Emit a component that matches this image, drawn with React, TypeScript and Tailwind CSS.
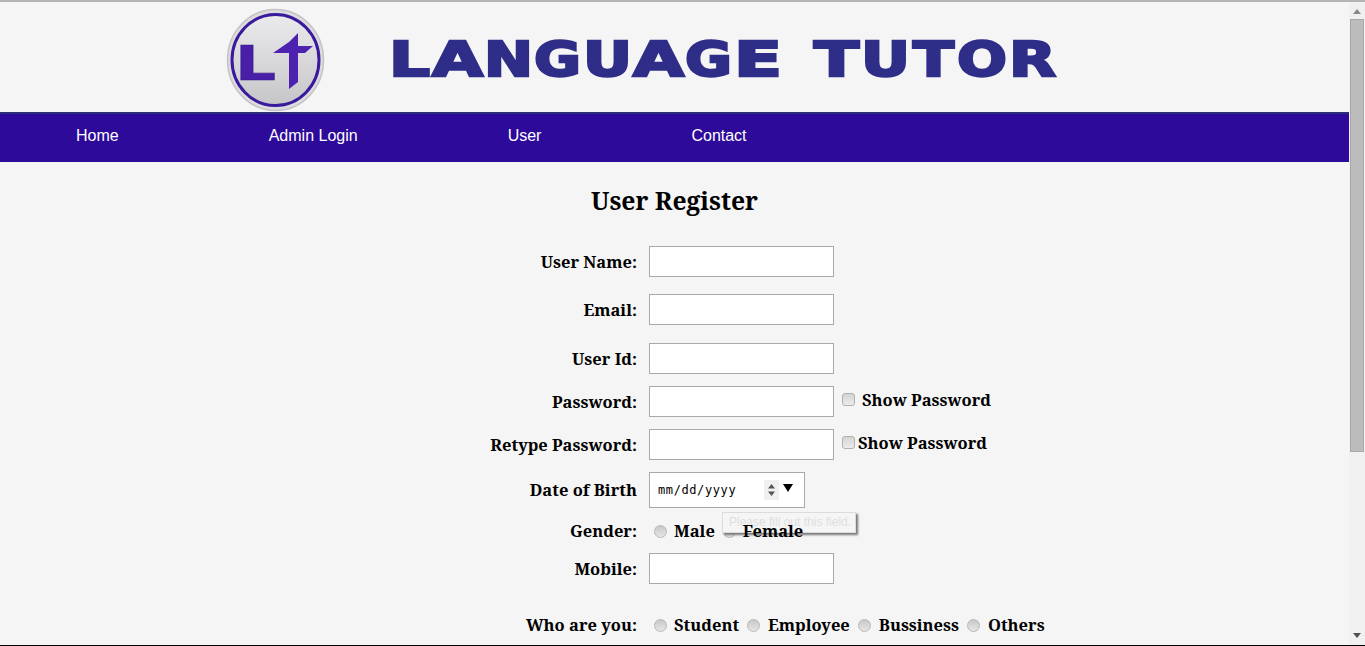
const SERIF = "font-['Noto_Serif','DejaVu_Serif','Liberation_Serif',serif]";

const letters = [
  { c: "L", x: 389, w: 41 },
  { c: "A", x: 432, w: 51 },
  { c: "N", x: 484, w: 49 },
  { c: "G", x: 534, w: 47 },
  { c: "U", x: 583, w: 49 },
  { c: "A", x: 633, w: 51 },
  { c: "G", x: 685, w: 47 },
  { c: "E", x: 734, w: 48 },
  { c: "T", x: 814, w: 45 },
  { c: "U", x: 861, w: 49 },
  { c: "T", x: 913, w: 41 },
  { c: "O", x: 957, w: 50 },
  { c: "R", x: 1009, w: 47 },
];

function Logo() {
  return (
    <svg width="1349" height="110" viewBox="0 2 1349 110" className="block" aria-label="Language Tutor">
      <defs>
        <linearGradient id="disc" x1="0" y1="0" x2="0" y2="1">
          <stop offset="0" stopColor="#ebebed" />
          <stop offset="1" stopColor="#c6c6c8" />
        </linearGradient>
        <clipPath id="tcut">
          <polygon points="298,33 298,46 313,46 305,53 298,53 298,82 289,89 289,53 273,53 289,42" />
        </clipPath>
      </defs>
      <ellipse cx="275.5" cy="60" rx="48" ry="50.5" fill="#dcdcde" stroke="#c4c4c6" strokeWidth="1.5" />
      <ellipse cx="275.5" cy="60" rx="43.5" ry="45.5" fill="url(#disc)" stroke="#3a1a9c" strokeWidth="3" />
      <text x="235" y="80" fontFamily="'DejaVu Sans',sans-serif" fontWeight="700" fontSize="48" fill="#4a1fa8" stroke="#35178c" strokeWidth="0.6" textLength="41" lengthAdjust="spacingAndGlyphs">L</text>
      <text x="268" y="93" fontFamily="'DejaVu Sans',sans-serif" fontWeight="700" fontSize="90" fill="#4e22b0" clipPath="url(#tcut)" textLength="60" lengthAdjust="spacingAndGlyphs">t</text>
      <text y="76" fontFamily="'DejaVu Sans',sans-serif" fontWeight="700" fontSize="48" fill="#2e2d88" stroke="#2e2d88" strokeWidth="2.4" strokeLinejoin="miter">
        {letters.map((l, i) => (
          <tspan key={i} x={l.x} textLength={l.w} lengthAdjust="spacingAndGlyphs">{l.c}</tspan>
        ))}
      </text>
    </svg>
  );
}

function TextBox() {
  return <input type="text" className="w-[185px] h-[31px] bg-white border border-[#a9a9a9] shrink-0" />;
}

function Radio() {
  return <span className="inline-block w-[13px] h-[13px] rounded-full border border-[#b8b8b8] bg-gradient-to-b from-[#c8c8c8] to-[#e6e6e6] shrink-0" />;
}

function Check() {
  return <span className="inline-block w-[13px] h-[13px] ml-2 mb-1 rounded-[3px] border border-[#b0b0b0] bg-gradient-to-b from-[#d4d4d4] to-[#ececec] shrink-0" />;
}

function Row({ label, className, children, labelClass = "" }: { label: string; className: string; children: React.ReactNode; labelClass?: string }) {
  return (
    <div className={`flex items-center ${className}`}>
      <div className={`w-[637px] text-right shrink-0 ${labelClass}`}>{label}</div>
      <div className="ml-3 flex items-center">{children}</div>
    </div>
  );
}

export default function App() {
  return (
    <div className="h-[646px] overflow-hidden flex flex-col bg-[#f5f5f5]">
      <div className="h-0.5 bg-[#b4b4b4] shrink-0" />
      <div className="flex flex-1 min-h-0">
        <main className="flex-1 min-w-0">
          <Logo />
          <nav className="h-[50px] bg-[#2e0a9a] border-t-2 border-[#2e2d78] flex items-center pl-[76px] pb-1 gap-[150px] text-white text-base font-['Liberation_Sans',sans-serif]">
            <span>Home</span>
            <span>Admin Login</span>
            <span>User</span>
            <span>Contact</span>
          </nav>
          <section className={`${SERIF} font-bold text-black text-[16.5px] relative`}>
            <h1 className="text-[24.7px] text-center pt-5 leading-[38px] h-[84px]">User Register</h1>
            <Row label="User Name:" className="h-[31px]" labelClass="pt-0.5"><TextBox /></Row>
            <Row label="Email:" className="h-[31px] mt-[17px]" labelClass="pt-0.5"><TextBox /></Row>
            <Row label="User Id:" className="h-[31px] mt-[18px]" labelClass="pt-0.5"><TextBox /></Row>
            <Row label="Password:" className="h-[31px] mt-3" labelClass="pt-0.5">
              <TextBox />
              <Check />
              <span className="ml-[7px] mb-0.5">Show Password</span>
            </Row>
            <Row label="Retype Password:" className="h-[31px] mt-3" labelClass="pt-0.5">
              <TextBox />
              <Check />
              <span className="ml-[3px] mb-0.5">Show Password</span>
            </Row>
            <Row label="Date of Birth" className="h-9 mt-3">
              <div className="w-[156px] h-9 bg-white border border-[#a9a9a9] flex items-center pl-2 font-normal text-xs text-black font-['DejaVu_Sans_Mono',monospace]">
                <span className="w-[105px] tracking-[0.6px]">mm/dd/yyyy</span>
                <svg width="15" height="20" viewBox="0 0 15 20" className="bg-[#f0f0f0] ml-[1px]">
                  <path d="M7.5 4 L11 8.5 H4 Z M7.5 16 L11 11.5 H4 Z" fill="#555" />
                </svg>
                <svg width="12" height="10" viewBox="0 0 12 10" className="ml-[3px] mb-1">
                  <path d="M1 1 H11 L6 9 Z" fill="#000" />
                </svg>
              </div>
            </Row>
            <Row label="Gender:" className="h-5 mt-[13px]">
              <span className="ml-[5px] flex"><Radio /></span>
              <span className="ml-[7px]">Male</span>
              <span className="ml-2 flex"><Radio /></span>
              <span className="ml-[7px] relative z-10">Female</span>
            </Row>
            <Row label="Mobile:" className="h-[31px] mt-3" labelClass="pt-0.5"><TextBox /></Row>
            <Row label="Who are you:" className="h-5 mt-[31px]">
              <span className="ml-[5px] flex"><Radio /></span>
              <span className="ml-[7px]">Student</span>
              <span className="ml-2 flex"><Radio /></span>
              <span className="ml-2">Employee</span>
              <span className="ml-2 flex"><Radio /></span>
              <span className="ml-2">Bussiness</span>
              <span className="ml-2 flex"><Radio /></span>
              <span className="ml-2">Others</span>
            </Row>
            <div className="absolute left-[722px] top-[350px] w-[134px] h-[21px] border border-[#dcdcdc] bg-[#f5f5f5] shadow-[2px_2px_2px_#777] font-normal text-xs text-[#dedede] font-['Liberation_Sans',sans-serif] pl-[6px] leading-[19px]">
              Please fill out this field.
            </div>
          </section>
        </main>
        <aside className="w-4 shrink-0 bg-[#f0f0f0] flex flex-col items-center">
          <svg width="16" height="17" viewBox="0 0 16 17" className="shrink-0">
            <path d="M8 7 L12 12 H4 Z" fill="#888" />
          </svg>
          <div className="w-[14px] h-[433px] bg-[#bcbcbc] border border-[#a8a8a8]" />
          <div className="flex-1" />
          <svg width="16" height="17" viewBox="0 0 16 17" className="shrink-0">
            <path d="M4 5 H12 L8 10 Z" fill="#505050" />
          </svg>
        </aside>
      </div>
      <div className="h-px bg-black shrink-0" />
    </div>
  );
}
